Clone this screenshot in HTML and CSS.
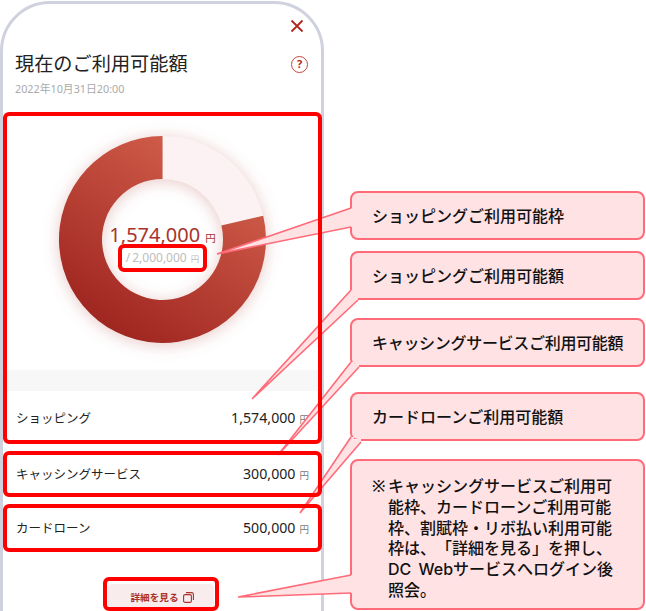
FILE: index.html
```html
<!DOCTYPE html>
<html lang="ja">
<head>
    <meta charset="UTF-8">
    <meta name="viewport" content="width=device-width, initial-scale=1.0">
    <title>現在のご利用可能額</title>
    <link rel="stylesheet" href="styles.css">
</head>
<body>
    <div class="stage">
        <div class="phone">
            <div class="close-row">
                <svg class="close-icon" width="14" height="14" viewBox="0 0 14 14">
                    <path d="M1.5 1.5 L12.5 12.5 M12.5 1.5 L1.5 12.5"/>
                </svg>
            </div>
            <div class="title-row">
                <h1>現在のご利用可能額</h1>
                <span class="help-icon">?</span>
            </div>
            <p class="date">2022年10月31日20:00</p>

            <div class="marked block-main">
                <div class="donut">
                    <svg width="207" height="207" viewBox="0 0 207 207">
                        <defs>
                            <linearGradient id="donut-fill" x1="0.85" y1="0.05" x2="0.25" y2="0.95">
                                <stop offset="0" stop-color="#d6644f"/>
                                <stop offset="1" stop-color="#9f2520"/>
                            </linearGradient>
                        </defs>
                        <path class="donut-track" d="M103.5 0 A103.5 103.5 0 0 1 204.2 79.7 L162.4 89.6 A60.5 60.5 0 0 0 103.5 43 Z"/>
                        <path class="donut-value" d="M103.5 0 A103.5 103.5 0 1 0 204.2 79.7 L162.4 89.6 A60.5 60.5 0 1 1 103.5 43 Z"/>
                    </svg>
                    <div class="donut-center">
                        <div class="amount">1,574,000<span class="amount-unit">円</span></div>
                        <div class="marked limit">/&#8201;2,000,000<span class="limit-unit">円</span></div>
                    </div>
                </div>
                <div class="band"></div>
                <div class="row row-first">
                    <span>ショッピング</span>
                    <span class="money">1,574,000<small>円</small></span>
                </div>
            </div>

            <div class="marked block-row">
                <div class="row">
                    <span>キャッシングサービス</span>
                    <span class="money">300,000<small>円</small></span>
                </div>
            </div>

            <div class="marked block-row block-row-last">
                <div class="row">
                    <span>カードローン</span>
                    <span class="money">500,000<small>円</small></span>
                </div>
            </div>

            <div class="marked detail-wrap">
                <div class="detail-btn">
                    詳細を見る
                    <svg class="copy-icon" width="11" height="11" viewBox="0 0 11 11">
                        <rect x="0.6" y="2.6" width="7.8" height="7.8" rx="1.5"/>
                        <path d="M3 0.6 H8.5 A1.9 1.9 0 0 1 10.4 2.5 V8"/>
                    </svg>
                </div>
            </div>
        </div>

        <div class="notes">
            <div class="note">ショッピングご利用可能枠</div>
            <div class="note note-2">ショッピングご利用可能額</div>
            <div class="note note-3">キャッシングサービスご利用可能額</div>
            <div class="note note-4">カードローンご利用可能額</div>
            <div class="note note-5">
                <span class="note-mark">※</span>
                <p>キャッシングサービスご利用可能枠、カードローンご利用可能枠、割賦枠・リボ払い利用可能枠は、「詳細を見る」を押し、DC Webサービスへログイン後照会。</p>
            </div>
        </div>

        <!-- callout tails, drawn under the red frames -->
        <svg class="tails" width="646" height="611" viewBox="0 0 646 611">
            <polygon points="351,208 217,254 351,227 354,227 354,208"/>
            <polyline points="351,208 217,254 351,227"/>
            <polygon points="351,290 252,399 358,300 358,297 354,297 354,290"/>
            <polyline points="351,290 252,399 358,300"/>
            <polygon points="351,362 278,455 359,367 359,364 354,364 354,362"/>
            <polyline points="351,362 278,455 359,367"/>
            <polygon points="351,437 300,513 361,442 361,439 354,439 354,437"/>
            <polyline points="351,437 300,513 361,442"/>
            <polygon points="351,575 238,597 351,593 354,593 354,575"/>
            <polyline points="351,575 238,597 351,593"/>
        </svg>
    </div>
</body>
</html>
```

FILE: styles.css
```css
* {
    box-sizing: border-box;
}

body {
    margin: 0;
    background: #fff;
    color: #222;
    font-family: "Noto Sans", "Noto Sans CJK JP", sans-serif;
}

.stage {
    position: relative;
    display: flex;
    align-items: flex-start;
    width: 646px;
    height: 611px;
    overflow: hidden;
}

.phone {
    flex: none;
    width: 324px;
    height: 680px;
    margin-top: 1px;
    border: 3px solid #cfd1de;
    border-radius: 50px;
}

.close-row {
    display: flex;
    justify-content: flex-end;
    padding: 15px 17px 0 0;
}

.close-icon path {
    fill: none;
    stroke: #b3261e;
    stroke-width: 1.8;
}

.title-row {
    display: flex;
    justify-content: space-between;
    align-items: center;
    margin-top: 17px;
    padding: 0 13px 0 12px;
}

h1 {
    margin: 0;
    font-size: 19.2px;
    font-weight: 400;
    line-height: 28px;
}

.help-icon {
    width: 17px;
    height: 17px;
    border: 1.5px solid #c6463e;
    border-radius: 50%;
    color: #b3261e;
    font-size: 11px;
    font-weight: 700;
    line-height: 14px;
    text-align: center;
}

.date {
    margin: 3px 0 15px 12px;
    color: #aaa;
    font-size: 10.8px;
    line-height: 16px;
}

/* red frames sit on their own pseudo element so the tails pass under them */
.marked {
    position: relative;
    padding: 4px;
}

.marked::after {
    content: "";
    position: absolute;
    inset: 0;
    z-index: 3;
    border: 4px solid #f00;
    border-radius: 6px;
    pointer-events: none;
}

.block-main {
    width: 319px;
    height: 332px;
}

.donut {
    position: relative;
    width: 207px;
    height: 207px;
    margin: 20px 0 0 52px;
}

.donut svg {
    display: block;
    overflow: visible;
    filter: drop-shadow(0 2px 8px rgba(160, 40, 30, 0.25));
}

.donut-track {
    fill: #fcf2f3;
}

.donut-value {
    fill: url(#donut-fill);
}

.donut-center {
    position: absolute;
    top: 87px;
    left: 0;
    width: 100%;
    display: flex;
    flex-direction: column;
    align-items: center;
}

.amount {
    color: #a8332e;
    font-size: 20px;
    line-height: 24px;
    white-space: nowrap;
}

.amount-unit {
    margin-left: 5px;
    font-size: 10.5px;
}

.limit {
    width: 89px;
    height: 28px;
    margin-top: -6px;
    background: #fff;
    color: #bdbdbd;
    font-size: 12px;
    line-height: 20px;
    text-align: center;
    white-space: nowrap;
}

.limit-unit {
    margin-left: 4px;
    font-size: 8.5px;
}

.band {
    height: 21px;
    margin-top: 27px;
    background: #f7f7f7;
}

.row {
    display: flex;
    justify-content: space-between;
    align-items: center;
    height: 38px;
    padding: 0 9px 2px;
    font-size: 12.5px;
}

.row-first {
    height: 49px;
    padding-top: 4px;
    padding-bottom: 0;
}

.money {
    color: #222;
    font-size: 14.2px;
}

.money small {
    margin-left: 4px;
    color: #777;
    font-size: 9.5px;
}

.block-row {
    width: 319px;
    height: 46px;
    margin-top: 7px;
}

.block-row-last {
    height: 48px;
}

.block-row-last .row {
    height: 40px;
}

.detail-wrap {
    width: 116px;
    height: 34px;
    margin: 25px 0 0 100px;
    padding: 7px 5px 0;
}

.detail-btn {
    display: flex;
    justify-content: center;
    align-items: center;
    gap: 5px;
    height: 30px;
    padding: 0 0 4px 3px;
    border-radius: 4px;
    background: #f8ecec;
    color: #a8332e;
    font-size: 9.6px;
    font-weight: 700;
}

.copy-icon rect,
.copy-icon path {
    fill: none;
    stroke: #a8332e;
    stroke-width: 1.1;
}

.notes {
    flex: none;
    display: flex;
    flex-direction: column;
    width: 295px;
    margin: 191px 0 0 26px;
}

.note {
    height: 49px;
    padding: 0 20px;
    border: 2px solid #ff6b78;
    border-radius: 8px;
    background: #ffe2e4;
    color: #111;
    font-size: 16px;
    font-weight: 500;
    line-height: 46px;
    white-space: nowrap;
}

.note-2 {
    margin-top: 11px;
}

.note-3 {
    margin-top: 18px;
    letter-spacing: -0.3px;
}

.note-4 {
    margin-top: 25px;
}

.note-5 {
    display: flex;
    height: 151px;
    margin-top: 18px;
    padding-top: 15px;
    line-height: 20.8px;
    white-space: normal;
}

.note-mark {
    flex: none;
    width: 16px;
}

.note-5 p {
    margin: 0;
    font-family: "Inter", "Noto Sans CJK JP", sans-serif;
    text-spacing-trim: space-all;
    word-spacing: 3px;
}

.tails {
    position: absolute;
    top: 0;
    left: 0;
    z-index: 2;
    pointer-events: none;
}

.tails polygon {
    fill: #ffe2e4;
}

.tails polyline {
    fill: none;
    stroke: #ff6b78;
    stroke-width: 1.6;
}
```
